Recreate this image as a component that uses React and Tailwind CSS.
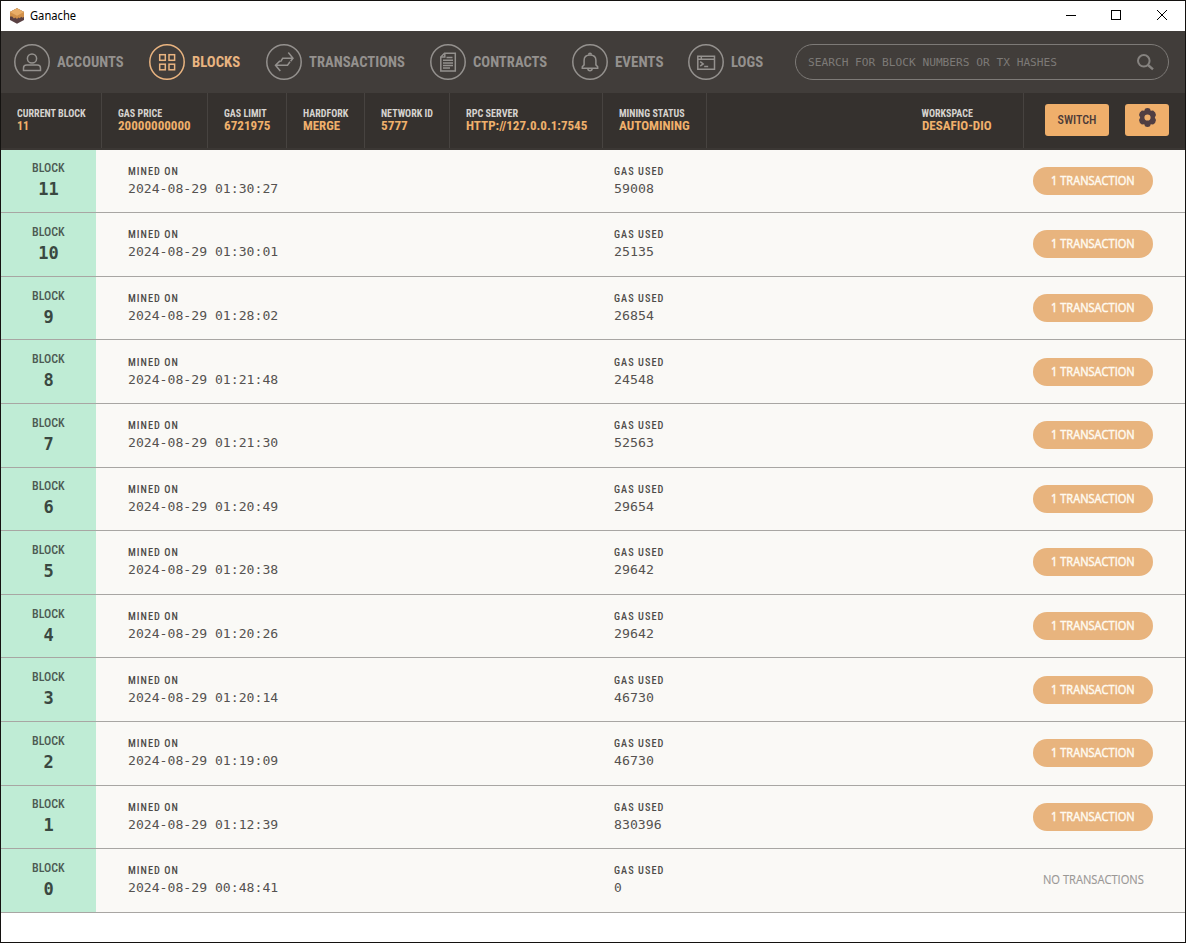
import React, { useLayoutEffect, useRef } from 'react';

/* Single line of text condensed horizontally to a given width. */
function Fit({ w, className = '', children }) {
  const ref = useRef(null);
  useLayoutEffect(() => {
    const el = ref.current;
    el.style.transform = `scaleX(${w / el.offsetWidth})`;
  }, [w, children]);
  return (
    <span className={`block ${className}`} style={{ width: w }}>
      <span ref={ref} className="inline-block origin-left whitespace-nowrap align-top">{children}</span>
    </span>
  );
}

const sans = "font-['Roboto_Condensed',Roboto,sans-serif]";

const icons = {
  accounts: (
    <>
      <circle cx="18" cy="14.5" r="4.6" />
      <path d="M9.5 26.5v-2.4c0-2 1.4-3 3.2-3h10.6c1.8 0 3.2 1 3.2 3v2.4z" />
    </>
  ),
  blocks: (
    <>
      <rect x="10.7" y="10.7" width="5.6" height="5.6" />
      <rect x="20" y="10.7" width="5.6" height="5.6" />
      <rect x="10.7" y="20.2" width="5.6" height="5.6" />
      <rect x="20" y="20.2" width="5.6" height="5.6" />
    </>
  ),
  transactions: (
    <path d="M14.6 17.6L16.7 14.3H26.8M22.3 8.6L27 14.3L24.6 17.3M24 17.8L21.5 21.3H9.5M14 16.9L9.5 21.3L14.3 27" />
  ),
  contracts: (
    <>
      <path d="M14.5 9.3H25.3V27H10.8V13z" />
      <path d="M14.8 9.3V13h-4" />
      <path d="M16.5 13.5h6M13 16.2h10M13 18.9h10M13 21.5h10M13 24.1h7" />
    </>
  ),
  events: (
    <>
      <path d="M10.3 24.2v-1.5l1.8-1.8v-4.6c0-3.2 2.2-5.4 5.9-5.4s5.9 2.2 5.9 5.4v4.6l1.8 1.8v1.5z" />
      <path d="M16.8 10.8c-.2-2.2 2.6-2.2 2.4 0M15.8 24.6c.3 2.8 4.1 2.8 4.4 0" />
    </>
  ),
  logs: (
    <>
      <path d="M9.8 12.2h16.7v13H9.8zM9.8 15.2h16.7M13.3 12.4v2.6" />
      <path d="M12.2 17.6l3 2.3-3 2.3M16.2 22.6h4" />
    </>
  ),
};

const nav = [
  { id: 'accounts', label: 'ACCOUNTS', w: 67, cell: 'w-[135px]' },
  { id: 'blocks', label: 'BLOCKS', w: 48, cell: 'w-[117px]', active: true },
  { id: 'transactions', label: 'TRANSACTIONS', w: 95.5, cell: 'w-[164px]' },
  { id: 'contracts', label: 'CONTRACTS', w: 74, cell: 'w-[142px]' },
  { id: 'events', label: 'EVENTS', w: 48, cell: 'w-[116px]' },
  { id: 'logs', label: 'LOGS', w: 32.5, cell: 'w-[107px]' },
];

const stats = [
  ['CURRENT BLOCK', 68.5, '11', 12, 'w-[101px]'],
  ['GAS PRICE', 44, '20000000000', 73, 'w-[106px]'],
  ['GAS LIMIT', 43, '6721975', 46, 'w-[79px]'],
  ['HARDFORK', 45, 'MERGE', 37.5, 'w-[78px]'],
  ['NETWORK ID', 52, '5777', 26.5, 'w-[85px]'],
  ['RPC SERVER', 52, 'HTTP://127.0.0.1:7545', 121, 'w-[153px]'],
  ['MINING STATUS', 66, 'AUTOMINING', 71, 'w-[104px]'],
];

/* Row height, then top padding of the block cell and of the details. */
const S = 'h-[63px]';
const T = 'h-[64px]';
const blocks = [
  [11, '2024-08-29 01:30:27', '59008', S, 'pt-[10px]', 'pt-[17px]'],
  [10, '2024-08-29 01:30:01', '25135', T, 'pt-[11px]', 'pt-[17px]'],
  [9, '2024-08-29 01:28:02', '26854', S, 'pt-[11px]', 'pt-[17px]'],
  [8, '2024-08-29 01:21:48', '24548', T, 'pt-[11px]', 'pt-[18px]'],
  [7, '2024-08-29 01:21:30', '52563', T, 'pt-[11px]', 'pt-[17px]'],
  [6, '2024-08-29 01:20:49', '29654', S, 'pt-[10px]', 'pt-[17px]'],
  [5, '2024-08-29 01:20:38', '29642', T, 'pt-[11px]', 'pt-[17px]'],
  [4, '2024-08-29 01:20:26', '29642', S, 'pt-[11px]', 'pt-[17px]'],
  [3, '2024-08-29 01:20:14', '46730', T, 'pt-[11px]', 'pt-[18px]'],
  [2, '2024-08-29 01:19:09', '46730', T, 'pt-[11px]', 'pt-[17px]'],
  [1, '2024-08-29 01:12:39', '830396', S, 'pt-[10px]', 'pt-[17px]'],
  [0, '2024-08-29 00:48:41', '0', T, 'pt-[11px]', 'pt-[17px]'],
];

function Stat({ label, lw, value, vw }) {
  return (
    <div className="pt-[14px] font-bold">
      <Fit w={lw} className="text-[10px] leading-[13px] text-[#d6d3cf]">{label}</Fit>
      <Fit w={vw} className="text-[12px] leading-[12px] text-[#efb06c]">{value}</Fit>
    </div>
  );
}

function Field({ label, lw, value, vw }) {
  return (
    <div>
      <Fit w={lw} className="text-[10px] font-medium leading-[10px] tracking-[1px] text-[#4d4b48]">{label}</Fit>
      <Fit w={vw} className="mt-[4px] font-['DejaVu_Sans_Mono',monospace] text-[13px] leading-[16px] text-[#555250]">{value}</Fit>
    </div>
  );
}

export default function App() {
  return (
    <div className={`flex h-[943px] w-[1186px] flex-col overflow-hidden border border-[#141210] bg-white ${sans}`}>
      <div className="flex h-[30px] shrink-0 items-center pl-[8px]">
        <svg className="h-[16px] w-[16px]" viewBox="0 0 16 16">
          <path d="M8 .2l7 3.800v8L8 15.800 1 12V4z" fill="#5a4143" />
          <path d="M1 4l7-3.8L15 4v5l-1.600.800-1.200-1-1.400 1.500-1.400-.800-1.400 1.600-1.600-1.700-1.500 1-1.700-2L1 8.600z" fill="#d0904a" />
          <path d="M8 .2l7 3.8-7 3.8L1 4z" fill="#e9ae68" />
        </svg>
        <Fit w={46.5} className="ml-[5px] font-['Noto_Sans',sans-serif] text-[12px] leading-[16px] text-black">Ganache</Fit>
        <svg className="ml-auto h-[30px] w-[137px]" viewBox="0 0 137 30" fill="none" stroke="#000" shapeRendering="crispEdges">
          <path d="M18 14.5h10" />
          <rect x="63.5" y="9.5" width="9" height="9" />
          <path d="M109 9l10 10M119 9l-10 10" shapeRendering="auto" />
        </svg>
      </div>

      <div className="flex h-[62px] shrink-0 items-center bg-[#413d3a] pl-[13px]">
        {nav.map((n) => (
          <div key={n.id} className={`flex shrink-0 items-center ${n.cell} ${n.active ? 'text-[#e9b480]' : 'text-[#94918e]'}`}>
            <svg className="h-[36px] w-[36px] shrink-0" viewBox="0 0 36 36" fill="none" stroke="currentColor" strokeWidth="1.5">
              <circle cx="18" cy="18" r="17.2" />
              {icons[n.id]}
            </svg>
            <Fit w={n.w} className="ml-[7px] text-[15px] font-bold leading-[20px]">{n.label}</Fit>
          </div>
        ))}
        <div className="flex h-[36px] w-[374px] shrink-0 items-center justify-between rounded-full border border-[#7d7a77] pl-[12px] pr-[14px] text-[#85827f]">
          <Fit w={249} className="pt-[1px] font-['DejaVu_Sans_Mono',monospace] text-[11px] leading-[16px] text-[#7d7a77]">SEARCH FOR BLOCK NUMBERS OR TX HASHES</Fit>
          <svg className="h-[18px] w-[18px]" viewBox="0 0 18 18" fill="none" stroke="currentColor">
            <circle cx="7.8" cy="7.8" r="5.8" strokeWidth="2" />
            <path d="M12 12l5 4.3" strokeWidth="2.4" />
          </svg>
        </div>
      </div>

      <div className="flex h-[57px] shrink-0 border-b-2 border-[#3b3734] bg-[#35312e]">
        {stats.map(([label, lw, value, vw, cell]) => (
          <div key={label} className={`shrink-0 border-r border-[#474340] pl-[16px] ${cell}`}>
            <Stat label={label} lw={lw} value={value} vw={vw} />
          </div>
        ))}
        <div className="ml-auto w-[103px] border-r border-[#474340] pl-[0.5px]">
          <Stat label="WORKSPACE" lw={51} value="DESAFIO-DIO" vw={69.5} />
        </div>
        <div className="flex gap-[16px] pl-[21px] pr-[16px] pt-[11px]">
          <button className="flex h-[32px] w-[64px] items-center justify-center rounded-[3px] bg-[#efaf6b]">
            <Fit w={39} className="text-[12px] font-medium leading-[16px] text-[#4b3a38]">SWITCH</Fit>
          </button>
          <button className="flex h-[32px] w-[44px] justify-center rounded-[3px] bg-[#efaf6b] pt-[4px]">
            <svg className="h-[19px] w-[19px]" viewBox="0 0 19 19" fill="#503e42">
              <path
                fillRule="evenodd"
                d="M7 .8Q9.5 -.6 12 .8L12.7 2.8 15.1 2.4Q17.8 4 18 6.9L16.8 9.5 18 12.1Q17.8 15 15.1 16.6L12.7 16.2 12 18.2Q9.5 19.6 7 18.2L6.3 16.2 3.9 16.6Q1.2 15 1 12.1L2.2 9.5 1 6.9Q1.2 4 3.9 2.4L6.3 2.8zM9.5 6.4a3.1 3.1 0 1 0 0 6.2a3.1 3.1 0 1 0 0-6.2z"
              />
            </svg>
          </button>
        </div>
      </div>

      <div className="shrink-0">
        {blocks.map(([num, mined, gas, h, padBlock, padInfo]) => (
          <div key={num} className={`flex border-b border-[#a8a6a3] bg-[#faf9f6] ${h}`}>
            <div className={`flex w-[95px] shrink-0 flex-col items-center bg-[#bfecd5] ${padBlock}`}>
              <Fit w={33} className="text-[12px] font-medium leading-[16px] text-[#4c5a52]">BLOCK</Fit>
              <span className="mt-[4px] font-['DejaVu_Sans_Mono',monospace] text-[17px] font-bold leading-[19px] text-[#3a4841]">{num}</span>
            </div>
            <div className={`flex flex-1 pl-[32px] ${padInfo}`}>
              <div className="w-[486px]">
                <Field label="MINED ON" lw={50.5} value={mined} vw={150.5} />
              </div>
              <Field label="GAS USED" lw={50.5} value={gas} vw={gas.length * 7.95} />
              <div className={`ml-auto mr-[32px] flex h-[28px] w-[120px] items-center justify-center rounded-full ${num ? 'bg-[#e8b47e]' : ''}`}>
                {num ? (
                  <Fit w={84} className="font-['Open_Sans',sans-serif] text-[12px] leading-[16px] text-[#fffaf0] [-webkit-text-stroke:0.45px_#fffaf0]">1 TRANSACTION</Fit>
                ) : (
                  <Fit w={101} className="font-['Open_Sans',sans-serif] text-[12px] leading-[16px] text-[#9a9896] [-webkit-text-stroke:0.15px_#9a9896]">NO TRANSACTIONS</Fit>
                )}
              </div>
            </div>
          </div>
        ))}
      </div>
    </div>
  );
}
